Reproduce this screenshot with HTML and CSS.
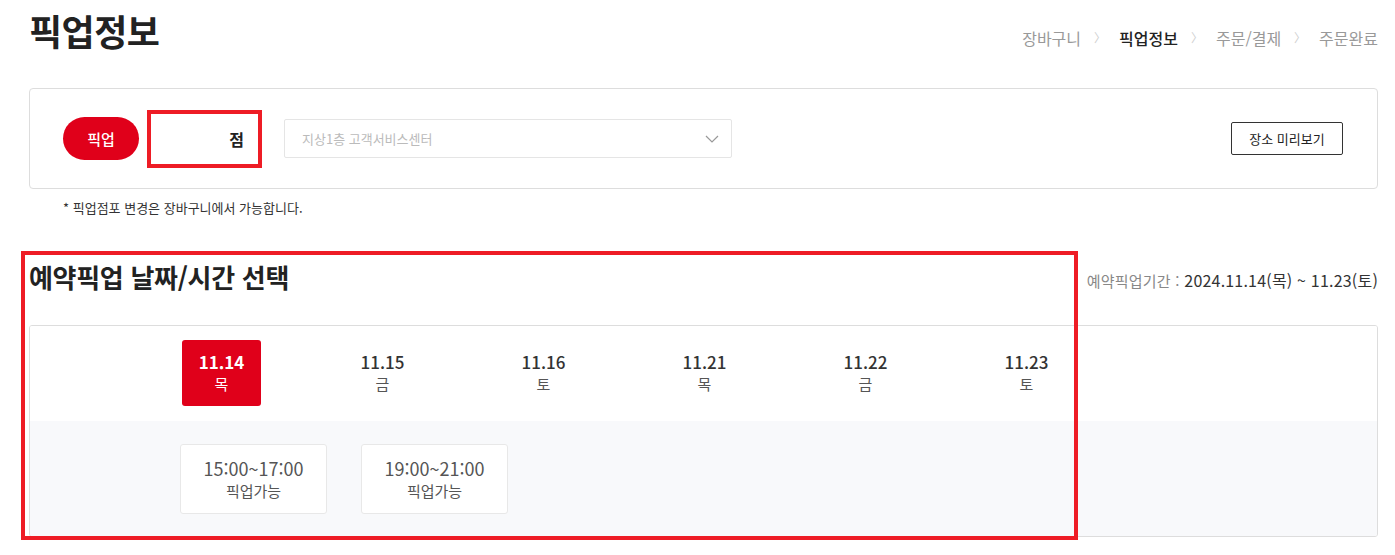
FILE: index.html
```html
<!DOCTYPE html>
<html lang="ko">
<head>
<meta charset="utf-8">
<link rel="stylesheet" href="styles.css">
</head>
<body>
<div class="page">
  <header class="top">
    <h1 class="title">픽업정보</h1>
    <ol class="crumbs">
      <li>장바구니</li>
      <li class="sep">〉</li>
      <li class="on">픽업정보</li>
      <li class="sep">〉</li>
      <li>주문/결제</li>
      <li class="sep">〉</li>
      <li>주문완료</li>
    </ol>
  </header>

  <section class="pickbox">
    <span class="pill">픽업</span>
    <div class="store"><span>점</span><i class="mark mark-store"></i></div>
    <div class="select">
      <span>지상1층 고객서비스센터</span>
      <svg class="chev" width="14" height="8" viewBox="0 0 14 8"><path d="M1 1l6 6 6-6" fill="none" stroke="#999" stroke-width="1.2"/></svg>
    </div>
    <button class="preview">장소 미리보기</button>
  </section>
  <p class="note">* 픽업점포 변경은 장바구니에서 가능합니다.</p>

  <section class="reserve">
    <div class="rhead">
      <h2>예약픽업 날짜/시간 선택</h2>
      <p class="period"><span class="lbl">예약픽업기간 :</span> 2024.11.14(목) ~ 11.23(토)</p>
    </div>
    <div class="panel">
      <ul class="dates">
        <li class="on"><b>11.14</b><span>목</span></li>
        <li><b>11.15</b><span>금</span></li>
        <li><b>11.16</b><span>토</span></li>
        <li><b>11.21</b><span>목</span></li>
        <li><b>11.22</b><span>금</span></li>
        <li><b>11.23</b><span>토</span></li>
      </ul>
      <div class="times">
        <div class="slot"><b>15:00~17:00</b><span>픽업가능</span></div>
        <div class="slot"><b>19:00~21:00</b><span>픽업가능</span></div>
      </div>
    </div>
    <i class="mark mark-reserve"></i>
  </section>
</div>
</body>
</html>
```
FILE: styles.css
```css
* { box-sizing: border-box; }
html, body { margin: 0; padding: 0; background: #fff; }
body {
  font-family: "Noto Sans CJK KR", "Noto Sans", sans-serif;
  color: #222;
}
.page { width: 1349px; margin-left: 29px; position: relative; padding-bottom: 12px; }

.top { display: flex; justify-content: space-between; align-items: flex-start; height: 88px; }
.title { margin: 6px 0 0; font-size: 36px; font-weight: 700; letter-spacing: -0.5px; line-height: 48px; color: #222; }
.crumbs { list-style: none; margin: 26px 0 0; padding: 0; display: flex; gap: 12px; font-size: 16px; line-height: 24px; color: #999; letter-spacing: 0; }
.crumbs li.on { color: #222; font-weight: 500; }
.crumbs li.sep { color: #d0d0d0; font-size: 12px; width: 14px; text-align: center; }

.pickbox {
  position: relative;
  height: 101px;
  border: 1px solid #ddd;
  border-radius: 4px;
  display: flex; align-items: center;
  padding: 0 33px;
}
.pill {
  width: 76px; height: 43px; border-radius: 22px; background: #e0001a; color: #fff;
  font-size: 15px; font-weight: 500; display: flex; align-items: center; justify-content: center;
}
.store { position: relative; width: 115px; height: 58px; margin-left: 8px; display: flex; align-items: center; justify-content: flex-end; padding-right: 18px; font-size: 16px; font-weight: 700; color: #222; }
.mark { position: absolute; display: block; border: 4px solid #ee1c25; pointer-events: none; }
.mark-store { inset: 0; }
.select {
  margin-left: 22px; width: 448px; height: 39px; border: 1px solid #e5e5e5; border-radius: 2px;
  display: flex; align-items: center; justify-content: space-between; padding: 0 12px 0 17px;
  font-size: 13px; color: #bbb;
}
.preview {
  margin-left: auto; margin-right: 1px; width: 112px; height: 33px; background: #fff; border: 1px solid #333; border-radius: 2px;
  font-family: inherit; font-size: 13px; color: #222; padding: 0;
}
.note { margin: 10px 0 0 34px; font-size: 13px; line-height: 18px; color: #333; letter-spacing: 0; }

.reserve { position: relative; margin-top: 33px; height: 287px; }
.mark-reserve { left: -8px; top: 1px; width: 1057px; bottom: -3px; }
.rhead { display: flex; justify-content: space-between; align-items: flex-start; height: 75px; }
.rhead h2 { margin: 9px 0 0; font-size: 26px; font-weight: 700; line-height: 36px; letter-spacing: -0.3px; color: #222; }
.period { margin: 20px 0 0; font-size: 16px; line-height: 20px; color: #333; letter-spacing: 0.2px; }
.period .lbl { color: #888; font-size: 15px; }

.panel { border: 1px solid #ddd; border-radius: 3px; overflow: hidden; height: 212px; }
.dates { list-style: none; margin: 0; padding: 14px 0 0 111px; display: flex; height: 95px; background: #fff; }
.dates li { width: 161px; display: flex; flex-direction: column; align-items: center; position: relative; }
.dates li b, .dates li span { display: block; text-align: center; position: relative; z-index: 1; }
.dates li b { font-size: 17px; font-weight: 500; line-height: 22px; color: #333; padding-top: 11px; }
.dates li span { font-size: 15px; line-height: 22px; color: #555; }
.dates li.on b { font-weight: 700; }
.dates li.on b, .dates li.on span { color: #fff; }
.dates li.on::after {
  content: ""; position: absolute; left: 41px; top: 0; width: 79px; height: 66px; background: #e0001a; border-radius: 3px;
}
.times { background: #f8f9fb; height: 115px; display: flex; gap: 34px; padding: 23px 0 0 150px; }
.slot {
  width: 147px; height: 70px; background: #fff; border: 1px solid #e8e8e8; border-radius: 3px;
  display: flex; flex-direction: column; align-items: center; justify-content: center;
}
.slot b { font-weight: 400; font-size: 18px; line-height: 23px; color: #555; }
.slot span { font-size: 15px; line-height: 22px; color: #555; }
```
